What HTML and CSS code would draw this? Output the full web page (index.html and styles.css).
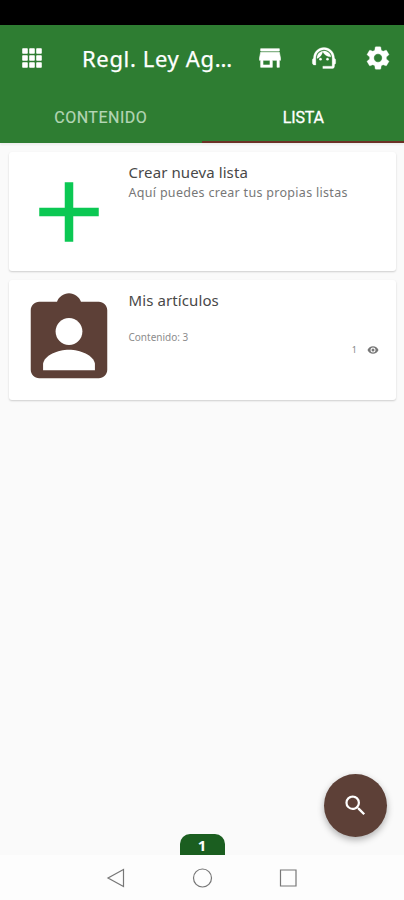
FILE: index.html
```html
<!DOCTYPE html>
<html lang="es">
<head>
<meta charset="utf-8">
<title>Regl. Ley Ag…</title>
<link rel="stylesheet" href="styles.css">
</head>
<body>
<div class="screen">
  <div class="status"></div>
  <header class="header">
    <div class="toolbar">
      <svg class="icon apps" viewBox="0 0 24 24"><path d="M4 8h4V4H4v4zm6 12h4v-4h-4v4zm-6 0h4v-4H4v4zm0-6h4v-4H4v4zm6 0h4v-4h-4v4zm6-10v4h4V4h-4zm-6 4h4V4h-4v4zm6 6h4v-4h-4v4zm0 6h4v-4h-4v4z"/></svg>
      <h1 class="title">Regl. Ley Ag…</h1>
      <div class="actions">
        <svg class="icon store" viewBox="0 0 24 24"><path d="M20 4H4v2h16V4zm1 10v-2l-1-5H4l-1 5v2h1v6h10v-6h4v6h2v-6h1zm-9 4H6v-4h6v4z"/></svg>
        <svg class="icon" viewBox="0 0 24 24"><path d="M21 12.22C21 6.73 16.74 3 12 3c-4.69 0-9 3.65-9 9.28-.6.34-1 .98-1 1.72v2c0 1.1.9 2 2 2h1v-6.1c0-3.87 3.13-7 7-7s7 3.13 7 7V19h-8v2h8c1.1 0 2-.9 2-2v-1.22c.59-.31 1-.92 1-1.64v-2.3c0-.7-.41-1.31-1-1.62z"/><circle cx="9" cy="13" r="1"/><circle cx="15" cy="13" r="1"/><path d="M18 11.03C17.52 8.18 15.04 6 12.05 6c-3.03 0-6.29 2.51-6.03 6.45 2.47-1.01 4.33-3.21 4.86-5.89 1.31 2.63 4 4.44 7.12 4.47z"/></svg>
        <svg class="icon gear" viewBox="0 0 24 24"><path d="M19.14 12.94c.04-.3.06-.61.06-.94s-.02-.64-.07-.94l2.03-1.58a.49.49 0 0 0 .12-.61l-1.92-3.32a.49.49 0 0 0-.59-.22l-2.39.96c-.5-.38-1.03-.7-1.62-.94l-.36-2.54A.48.48 0 0 0 13.92 2.4h-3.84c-.24 0-.43.17-.47.41l-.36 2.54c-.59.24-1.13.57-1.62.94l-2.39-.96a.48.48 0 0 0-.59.22L2.74 8.87a.47.47 0 0 0 .12.61l2.03 1.58c-.05.3-.09.63-.09.94s.02.64.07.94l-2.03 1.58a.49.49 0 0 0-.12.61l1.92 3.32c.12.22.37.29.59.22l2.39-.96c.5.38 1.03.7 1.62.94l.36 2.54c.05.24.24.41.48.41h3.84c.24 0 .44-.17.47-.41l.36-2.54c.59-.24 1.13-.56 1.62-.94l2.39.96c.22.08.47 0 .59-.22l1.92-3.32a.47.47 0 0 0-.12-.61l-2.01-1.58zM12 15.6a3.6 3.6 0 1 1 0-7.2 3.6 3.6 0 0 1 0 7.2z"/></svg>
      </div>
    </div>
    <nav class="tabs">
      <div class="tab">CONTENIDO</div>
      <div class="tab active">LISTA</div>
    </nav>
  </header>
  <main class="content">
    <article class="card">
      <svg class="thumb plus" viewBox="0 0 24 24"><path d="M19 13h-6v6h-2v-6H5v-2h6V5h2v6h6v2z"/></svg>
      <div class="body">
        <h2 class="name">Crear nueva lista</h2>
        <p class="desc">Aquí puedes crear tus propias listas</p>
      </div>
    </article>
    <article class="card">
      <svg class="thumb badge" viewBox="0 0 24 24"><path d="M19 3h-4.180C14.400 1.840 13.300 1 12 1c-1.300 0-2.400.84-2.820 2H5c-1.100 0-2 .9-2 2v14c0 1.100.9 2 2 2h14c1.100 0 2-.9 2-2V5c0-1.100-.9-2-2-2z"/><circle class="hole" cx="12" cy="10" r="3.150"/><path class="hole" d="M5.900 19.100v-1.500C6.200 15.600 9.400 14.300 12 14.300s5.800 1.300 6.100 3.300v1.500z"/></svg>
      <div class="body">
        <h2 class="name">Mis artículos</h2>
        <p class="count">Contenido: 3</p>
        <div class="views"><span>1</span><svg class="eye" viewBox="0 0 24 24"><path fill-rule="evenodd" d="M12 4.500C7 4.500 2.730 7.610 1 12c1.730 4.390 6 7.500 11 7.500s9.270-3.110 11-7.500c-1.730-4.390-6-7.500-11-7.500zM12 17a5 5 0 1 1 0-10 5 5 0 0 1 0 10zm0-8a3 3 0 1 0 0 6 3 3 0 0 0 0-6z"/></svg></div>
      </div>
    </article>
  </main>
  <footer class="navbar">
    <svg class="key" viewBox="0 0 24 24"><path d="M19.500 3.500v17L4 12z"/></svg>
    <svg class="key" viewBox="0 0 24 24"><circle cx="12.500" cy="12" r="9"/></svg>
    <svg class="key" viewBox="0 0 24 24"><path d="M4.500 4h15.500v16H4.500z"/></svg>
  </footer>
  <div class="page">1</div>
  <div class="fab"><svg viewBox="0 0 24 24"><path d="M15.500 14h-.79l-.28-.27A6.470 6.470 0 0 0 16 9.500 6.500 6.500 0 1 0 9.500 16c1.610 0 3.090-.59 4.230-1.570l.27.28v.79l5 4.990L20.490 19l-4.990-5zm-6 0C7.010 14 5 11.990 5 9.500S7.010 5 9.500 5 14 7.010 14 9.500 11.990 14 9.500 14z"/></svg></div>
</div>
</body>
</html>
```
FILE: styles.css
```css
* { box-sizing: border-box; margin: 0; padding: 0; }
body { background: #fafafa; font-family: Roboto, "Open Sans", sans-serif; }
.screen { position: relative; display: flex; flex-direction: column; width: 404px; height: 900px; overflow: hidden; }
.status { height: 25px; background: #000; }
.header { height: 118px; background: #2e7d32; color: #fff; box-shadow: 0 2px 2px rgba(0, 0, 0, .05); }
.toolbar { display: flex; align-items: center; height: 65px; padding: 0 12px 0 18px; }
.icon { display: block; width: 28px; height: 28px; fill: #fff; stroke: #fff; stroke-width: .25; }
.apps { stroke-width: .7; }
.store { stroke-width: .5; }
.gear { stroke-width: .3; }
.title { margin-left: 36px; width: 170px; padding-top: 1px; font: 400 22px/30px "Noto Sans", sans-serif; letter-spacing: .65px; white-space: nowrap; -webkit-text-stroke: .25px #fff; }
.actions { display: flex; gap: 26px; margin-left: 4px; }
.tabs { display: flex; height: 53px; }
.tab { flex: 1; padding-top: 17px; text-align: center; font-size: 16px; line-height: 21px; letter-spacing: .5px; color: #b4d6b5; -webkit-text-stroke: .2px; }
.tab.active { color: #fff; letter-spacing: -.2px; padding-left: 1px; -webkit-text-stroke: .3px; border-bottom: 2px solid #6b3025; }
.content { flex: 1; display: flex; flex-direction: column; gap: 9px; padding: 8.500px 8px 0 9px; }
.card { display: flex; height: 119.500px; padding: 9px; background: #fff; border-radius: 3px; box-shadow: 0 1px 2px rgba(0, 0, 0, .18); }
.thumb { flex: none; width: 102px; height: 102px; }
.plus { fill: #0bc853; }
.badge { fill: #5d4037; }
.hole { fill: #fff; }
.body { flex: 1; margin-left: 8.500px; font-family: "Noto Sans", sans-serif; }
.name { font-size: 15px; line-height: 23px; font-weight: 400; letter-spacing: .1px; color: #484848; }
.desc { font-size: 12.500px; line-height: 18px; letter-spacing: .3px; color: #777; }
.count { margin-top: 18px; font-size: 10px; line-height: 14px; color: #8c8c8c; }
.views { display: flex; justify-content: flex-end; align-items: center; gap: 10px; margin-right: 8px; font-size: 9px; line-height: 12px; color: #888; }
.eye { width: 12px; height: 12px; fill: #777; }
.navbar { display: flex; justify-content: center; align-items: center; gap: 62px; height: 45px; background: #fdfdfd; }
.key { width: 24px; height: 24px; fill: none; stroke: #777; stroke-width: 1.200; }
.page { position: absolute; left: 179.500px; top: 834px; width: 45px; height: 21px; border-radius: 10px 10px 0 0; background: #1b5e20; color: #fff; font: 700 15px/23px "Noto Sans", sans-serif; text-align: center; }
.fab { position: absolute; left: 324px; top: 774px; width: 63px; height: 63px; border-radius: 50%; background: #5d4037; box-shadow: 0 3px 7px rgba(0, 0, 0, .3); display: flex; align-items: center; justify-content: center; }
.fab svg { width: 27px; height: 27px; fill: #fff; margin-right: 1px; }
```
